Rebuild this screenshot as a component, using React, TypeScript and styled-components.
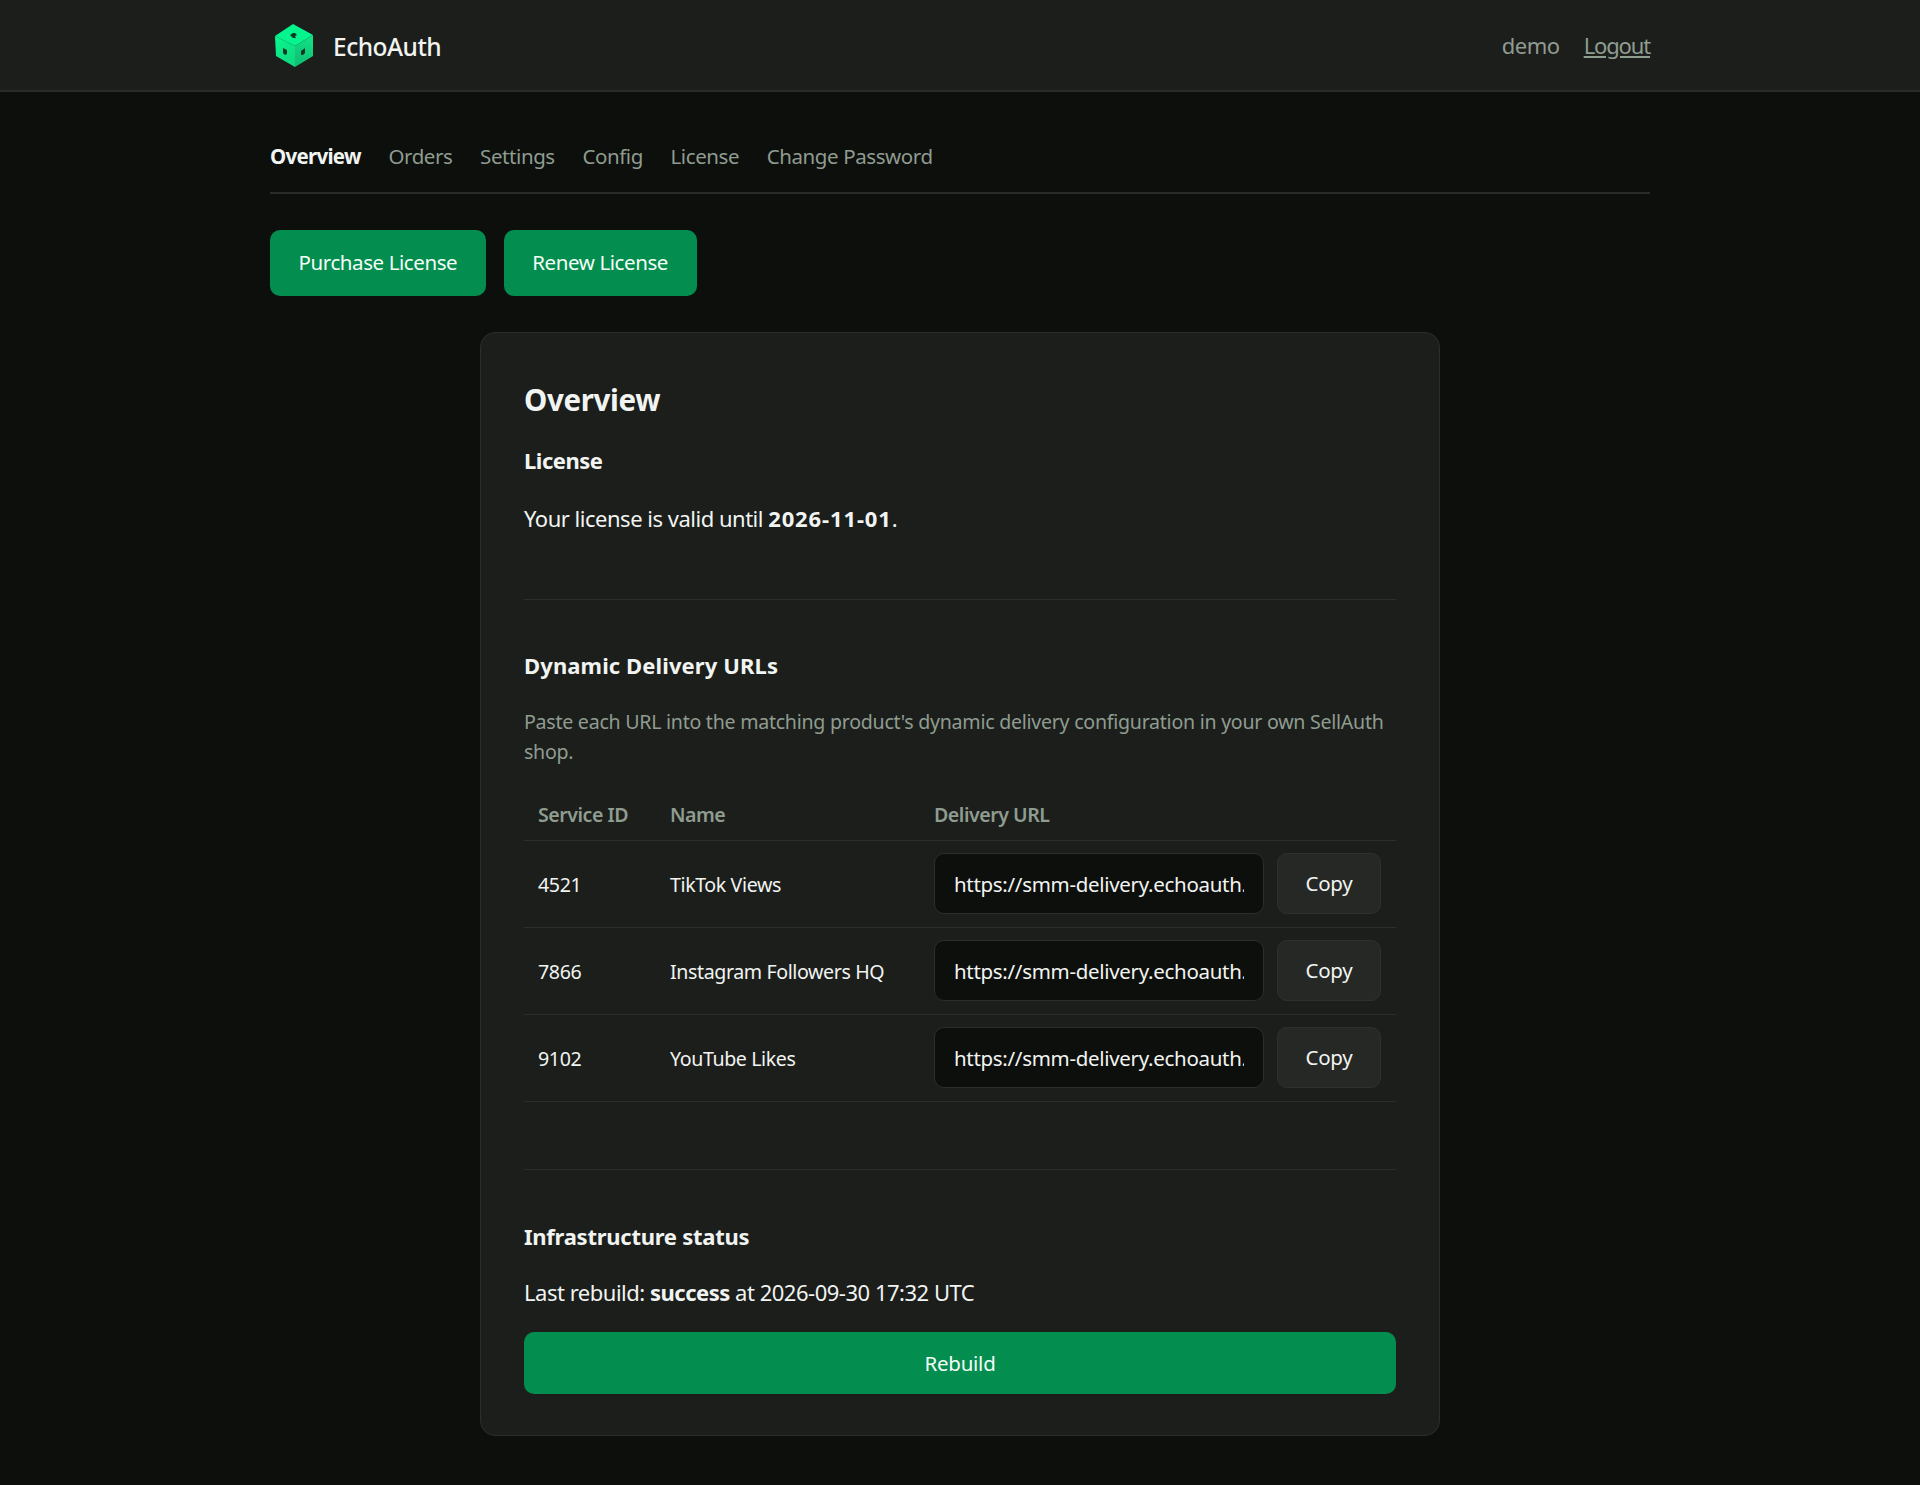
import React from "react";
import styled, { createGlobalStyle } from "styled-components";

const GlobalStyle = createGlobalStyle`
  * {
    box-sizing: border-box;
  }
  body {
    margin: 0;
    background: #0d0f0d;
    color: #f1f4f1;
    font-family: "Noto Sans", "Open Sans", sans-serif;
    font-size: 19.6px;
    letter-spacing: -0.025em;
  }
`;

const services = [
  { id: "4521", name: "TikTok Views" },
  { id: "7866", name: "Instagram Followers HQ" },
  { id: "9102", name: "YouTube Likes" },
];

const tabs = ["Overview", "Orders", "Settings", "Config", "License", "Change Password"];

const Logo = () => (
  <LogoSvg viewBox="0 0 38 43" aria-hidden="true">
    <defs>
      <linearGradient id="cubeLeft" x1="0" y1="0" x2="0.6" y2="1">
        <stop offset="0" stopColor="#08f790" />
        <stop offset="1" stopColor="#10da80" />
      </linearGradient>
      <linearGradient id="cubeRight" x1="0.5" y1="0" x2="0.3" y2="1">
        <stop offset="0" stopColor="#12e086" />
        <stop offset="1" stopColor="#0fbc70" />
      </linearGradient>
    </defs>
    <path d="M18 0 L38 11 L20 22 L0 12 Z" fill="#05f58e" />
    <path d="M0 12 L20 22 L20 43 L1 32 Z" fill="url(#cubeLeft)" />
    <path d="M38 11 L20 22 L20 43 L38 32 Z" fill="url(#cubeRight)" />
    <path d="M15 11 L18 9 L20 9 L22 11 L20 12 L21 14 L18 14 Z" fill="#0f3a26" />
    <path d="M8 24 L12 26 L12 30 L10 31 L8 29 Z" fill="#0f3a26" />
    <path d="M26 27 L30 24 L30 29 L28 31 L26 31 Z" fill="#0f3a26" />
  </LogoSvg>
);

export default function App() {
  return (
    <>
      <GlobalStyle />
      <Header>
        <HeaderInner>
          <Brand>
            <Logo />
            <BrandName>EchoAuth</BrandName>
          </Brand>
          <UserArea>
            <UserName>demo</UserName>
            <LogoutLink href="#">Logout</LogoutLink>
          </UserArea>
        </HeaderInner>
      </Header>
      <Main>
        <Tabs>
          {tabs.map((t, i) => (
            <Tab key={t} $active={i === 0} href="#">
              {t}
            </Tab>
          ))}
        </Tabs>
        <Actions>
          <ActionButton>Purchase License</ActionButton>
          <ActionButton>Renew License</ActionButton>
        </Actions>
        <Card>
          <CardTitle>Overview</CardTitle>
          <SectionTitle>License</SectionTitle>
          <LicenseText>
            Your license is valid until <strong>2026-11-01</strong>.
          </LicenseText>
          <Divider />
          <DeliveryTitle>Dynamic Delivery URLs</DeliveryTitle>
          <Hint>
            Paste each URL into the matching product's dynamic delivery configuration in your own
            SellAuth shop.
          </Hint>
          <Table>
            <thead>
              <tr>
                <HeadCell $width={132}>Service ID</HeadCell>
                <HeadCell $width={264}>Name</HeadCell>
                <HeadCell>Delivery URL</HeadCell>
              </tr>
            </thead>
            <tbody>
              {services.map((s) => (
                <tr key={s.id}>
                  <Cell>{s.id}</Cell>
                  <Cell>{s.name}</Cell>
                  <Cell>
                    <UrlRow>
                      <UrlInput readOnly value={`https://smm-delivery.echoauth.com/dd/${s.id}`} />
                      <CopyButton>Copy</CopyButton>
                    </UrlRow>
                  </Cell>
                </tr>
              ))}
            </tbody>
          </Table>
          <LowerDivider />
          <InfraTitle>Infrastructure status</InfraTitle>
          <StatusText>
            Last rebuild: <strong>success</strong> at 2026-09-30 17:32 UTC
          </StatusText>
          <RebuildButton>Rebuild</RebuildButton>
        </Card>
      </Main>
    </>
  );
}

const Header = styled.header`
  height: 92px;
  background: #1c1e1c;
  border-bottom: 2px solid #2a2c2a;
`;

const HeaderInner = styled.div`
  width: 1380px;
  height: 90px;
  margin: 0 auto;
  display: flex;
  align-items: center;
  justify-content: space-between;
`;

const Brand = styled.div`
  display: flex;
  align-items: center;
  gap: 20px;
  padding-left: 5px;
`;

const LogoSvg = styled.svg`
  width: 38px;
  height: 43px;
  display: block;
`;

const BrandName = styled.span`
  font-size: 24.5px;
  font-weight: 500;
  color: #f1f4f1;
  position: relative;
  top: 1px;
`;

const UserArea = styled.div`
  display: flex;
  align-items: center;
  gap: 24px;
  font-size: 22px;
  color: #8f9c90;
`;

const UserName = styled.span``;

const LogoutLink = styled.a`
  color: #8f9c90;
  text-decoration: underline;
  letter-spacing: -0.052em;
`;

const Main = styled.main`
  width: 1380px;
  margin: 0 auto;
  padding-bottom: 49px;
`;

const Tabs = styled.nav`
  display: flex;
  gap: 27.6px;
  height: 102px;
  padding-top: 49px;
  border-bottom: 2px solid #2a2c2a;
`;

const Tab = styled.a<{ $active?: boolean }>`
  font-size: 20.5px;
  line-height: 30px;
  text-decoration: none;
  font-weight: ${(p) => (p.$active ? 700 : 400)};
  letter-spacing: ${(p) => (p.$active ? "-0.035em" : "-0.02em")};
  color: ${(p) => (p.$active ? "#f1f4f1" : "#8f9c90")};
`;

const Actions = styled.div`
  display: flex;
  gap: 18px;
  margin-top: 36px;
`;

const ActionButton = styled.button`
  height: 66px;
  padding: 0 28.5px 2px;
  border: 0;
  border-radius: 10px;
  background: #038d4e;
  color: #f4fff8;
  font: inherit;
  font-size: 20.5px;
  letter-spacing: -0.02em;
`;

const Card = styled.section`
  width: 960px;
  height: 1104px;
  margin: 36px auto 0;
  padding: 42px 43px;
  background: #1c1e1c;
  border: 1.5px solid #2c2e2c;
  border-radius: 15px;
`;

const CardTitle = styled.h2`
  margin: 0;
  font-size: 29.5px;
  line-height: 50px;
  font-weight: 700;
  letter-spacing: -0.012em;
`;

const SectionTitle = styled.h3`
  margin: 17px 0 0;
  font-size: 22px;
  line-height: 36px;
  font-weight: 700;
`;

const LicenseText = styled.p`
  margin: 22px 0 0;
  font-size: 22px;
  line-height: 36px;

  strong {
    letter-spacing: 0.04em;
  }
`;

const Divider = styled.hr`
  margin: 63px 0 0;
  border: 0;
  border-top: 1.5px solid #2c2e2c;
`;

const LowerDivider = styled(Divider)`
  margin-top: 67px;
`;

const DeliveryTitle = styled.h3`
  margin: 47px 0 0;
  font-size: 22px;
  line-height: 36px;
  font-weight: 700;
  letter-spacing: 0.005em;
`;

const InfraTitle = styled(DeliveryTitle)`
  margin-top: 48px;
  letter-spacing: -0.012em;
`;

const Hint = styled.p`
  margin: 24px 0 0;
  font-size: 19.6px;
  line-height: 30px;
  color: #8f9c90;
  letter-spacing: -0.0135em;
`;

const Table = styled.table`
  width: 100%;
  margin-top: 23px;
  border-collapse: collapse;
  table-layout: fixed;
`;

const HeadCell = styled.th<{ $width?: number }>`
  height: 50px;
  padding: 0 14px;
  width: ${(p) => (p.$width ? `${p.$width}px` : "auto")};
  text-align: left;
  font-size: 19.6px;
  font-weight: 600;
  color: #8f9c90;
  border-bottom: 1.5px solid #2c2e2c;
`;

const Cell = styled.td`
  height: 87px;
  padding: 2px 14px 0;
  font-size: 19.6px;
  letter-spacing: -0.02em;
  border-bottom: 1.5px solid #2c2e2c;
`;

const UrlRow = styled.div`
  display: flex;
  gap: 13px;
  margin-top: -2px;
`;

const UrlInput = styled.input`
  width: 330px;
  height: 61px;
  padding: 0 19px;
  background: #0d0f0d;
  border: 1.5px solid #2c2e2c;
  border-radius: 10px;
  color: #f1f4f1;
  font: inherit;
  font-size: 20.5px;
  letter-spacing: -0.015em;
`;

const CopyButton = styled.button`
  width: 104px;
  height: 61px;
  padding-bottom: 2px;
  background: #262826;
  border: 1.5px solid #2f312f;
  border-radius: 10px;
  color: #f1f4f1;
  font: inherit;
  font-size: 20.5px;
  letter-spacing: -0.01em;
`;

const StatusText = styled.p`
  margin: 20px 0 0;
  font-size: 22px;
  line-height: 36px;
  letter-spacing: -0.022em;
`;

const RebuildButton = styled.button`
  display: block;
  width: 100%;
  height: 62px;
  margin-top: 22px;
  border: 0;
  border-radius: 10px;
  background: #038d4e;
  color: #f4fff8;
  font: inherit;
  font-size: 20.5px;
  letter-spacing: -0.012em;
`;
